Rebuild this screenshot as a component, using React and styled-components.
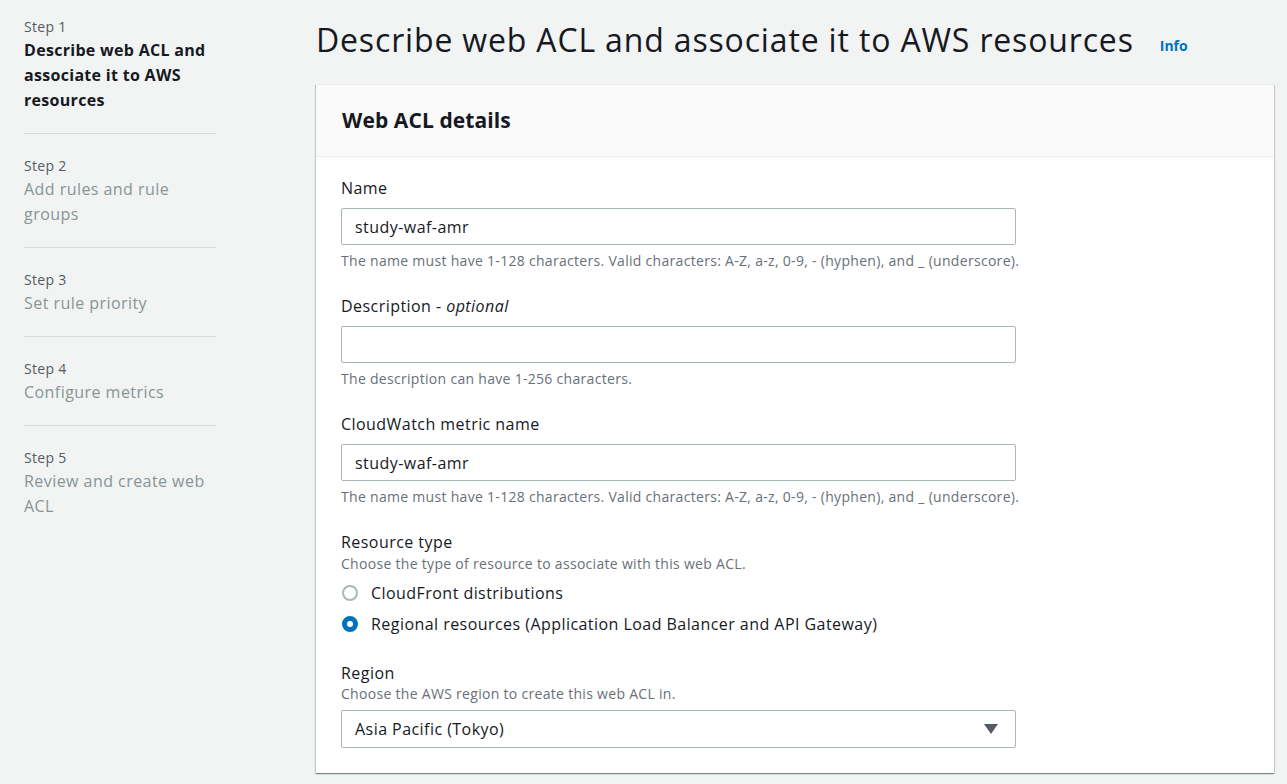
import React from "react";
import styled, { createGlobalStyle } from "styled-components";

const Global = createGlobalStyle`
  html, body { margin: 0; padding: 0; background: #f2f3f3; }
  body { font-family: "Open Sans", "Noto Sans", sans-serif; color: #16191f; }
  * { box-sizing: border-box; }
`;

const Page = styled.div`
  display: flex;
  min-height: 784px;
  background: #f2f3f3;
`;

const Sidebar = styled.nav`
  width: 216px;
  flex-shrink: 0;
  padding: 16px 0 0 24px;
`;

const StepItem = styled.div`
  padding: 21px 0 20px;
  border-bottom: 1px solid ${(p) => (p.$last ? "transparent" : "#d5dbdb")};
  &:first-child { padding-top: 0; }
`;

const StepLabel = styled.div`
  font-size: 14px;
  line-height: 22px;
  letter-spacing: 0.3px;
  color: #545b64;
`;

const StepTitle = styled.div`
  font-size: 16px;
  line-height: 25px;
  letter-spacing: ${(p) => (p.$active ? "0.3px" : "0.45px")};
  font-weight: ${(p) => (p.$active ? 700 : 400)};
  color: ${(p) => (p.$active ? "#16191f" : "#879596")};
`;

const Main = styled.main`
  flex: 1;
  padding: 20px 13px 0 100px;
`;

const TitleRow = styled.div`
  display: flex;
  align-items: center;
  gap: 26px;
  margin-bottom: 24px;
`;

const H1 = styled.h1`
  margin: 0;
  font-size: 32px;
  line-height: 40px;
  font-weight: 400;
  letter-spacing: 0.84px;
  color: #16191f;
`;

const InfoLink = styled.a`
  font-size: 14px;
  line-height: 20px;
  margin-top: 12px;
  font-weight: 700;
  color: #0073bb;
  text-decoration: none;
`;

const Card = styled.section`
  background: #fff;
  border-top: 1px solid #eaeded;
  box-shadow: 0 1px 1px 0 rgba(0, 28, 36, 0.3), 1px 1px 1px 0 rgba(0, 28, 36, 0.15),
    -1px 1px 1px 0 rgba(0, 28, 36, 0.15);
`;

const CardHeader = styled.header`
  background: #fafafa;
  border-bottom: 1px solid #eaeded;
  padding: 19px 26px 20px;
`;

const CardTitle = styled.h2`
  margin: 0;
  font-size: 21px;
  line-height: 32px;
  font-weight: 700;
  letter-spacing: 0.1px;
  color: #16191f;
`;

const CardBody = styled.div`
  padding: 20px 25px 25px;
  display: flex;
  flex-direction: column;
  gap: 26px;
`;

const Field = styled.div`
  display: flex;
  flex-direction: column;
`;

const Label = styled.label`
  font-size: 16px;
  line-height: 22px;
  letter-spacing: 0.45px;
  color: #16191f;
  em { font-style: italic; }
`;

const Description = styled.div`
  font-size: 14px;
  line-height: 16px;
  letter-spacing: 0.3px;
  color: #687078;
  margin-top: ${(p) => p.$top || 0}px;
`;

const Input = styled.input`
  width: 675px;
  height: 37px;
  margin-top: 9px;
  padding: 0 13px;
  border: 1px solid #aab7b8;
  border-radius: 2px;
  font-family: inherit;
  font-size: 16px;
  letter-spacing: 0.45px;
  color: #16191f;
  background: #fff;
  outline: none;
`;

const RadioGroup = styled.div`
  display: flex;
  flex-direction: column;
  margin: 5px 0 -3px;
`;

const RadioRow = styled.label`
  display: flex;
  align-items: center;
  gap: 13px;
  height: 31px;
  font-size: 16px;
  letter-spacing: 0.45px;
  color: #16191f;
  padding-left: 1px;
`;

const RadioDot = styled.span`
  width: 16px;
  height: 16px;
  border-radius: 50%;
  flex-shrink: 0;
  border: ${(p) => (p.$checked ? "5px solid #0073bb" : "2px solid #aab7b8")};
  background: #fff;
`;

const Select = styled.div`
  width: 675px;
  height: 38px;
  margin-top: 8px;
  padding: 0 17px 0 13px;
  border: 1px solid #aab7b8;
  border-radius: 2px;
  display: flex;
  align-items: center;
  justify-content: space-between;
  font-size: 16px;
  letter-spacing: 0.45px;
  color: #16191f;
  background: #fff;
`;

const Caret = () => (
  <svg width="14" height="10" viewBox="0 0 14 10">
    <path d="M0 0 H14 L7 10 Z" fill="#545b64" />
  </svg>
);

const steps = [
  { n: 1, title: "Describe web ACL and associate it to AWS resources", active: true },
  { n: 2, title: "Add rules and rule groups" },
  { n: 3, title: "Set rule priority" },
  { n: 4, title: "Configure metrics" },
  { n: 5, title: "Review and create web ACL" },
];

const nameHint =
  "The name must have 1-128 characters. Valid characters: A-Z, a-z, 0-9, - (hyphen), and _ (underscore).";

export default function App() {
  return (
    <>
      <Global />
      <Page>
        <Sidebar>
          {steps.map((s, i) => (
            <StepItem key={s.n} $last={i === steps.length - 1}>
              <StepLabel>Step {s.n}</StepLabel>
              <StepTitle $active={s.active}>{s.title}</StepTitle>
            </StepItem>
          ))}
        </Sidebar>
        <Main>
          <TitleRow>
            <H1>Describe web ACL and associate it to AWS resources</H1>
            <InfoLink href="#">Info</InfoLink>
          </TitleRow>
          <Card>
            <CardHeader>
              <CardTitle>Web ACL details</CardTitle>
            </CardHeader>
            <CardBody>
              <Field>
                <Label>Name</Label>
                <Input defaultValue="study-waf-amr" />
                <Description $top={8}>{nameHint}</Description>
              </Field>
              <Field>
                <Label>
                  Description - <em>optional</em>
                </Label>
                <Input defaultValue="" />
                <Description $top={8}>The description can have 1-256 characters.</Description>
              </Field>
              <Field>
                <Label>CloudWatch metric name</Label>
                <Input defaultValue="study-waf-amr" />
                <Description $top={8}>{nameHint}</Description>
              </Field>
              <Field>
                <Label>Resource type</Label>
                <Description $top={3}>Choose the type of resource to associate with this web ACL.</Description>
                <RadioGroup>
                  <RadioRow>
                    <RadioDot />
                    CloudFront distributions
                  </RadioRow>
                  <RadioRow>
                    <RadioDot $checked />
                    Regional resources (Application Load Balancer and API Gateway)
                  </RadioRow>
                </RadioGroup>
              </Field>
              <Field>
                <Label>Region</Label>
                <Description $top={2}>Choose the AWS region to create this web ACL in.</Description>
                <Select>
                  <span>Asia Pacific (Tokyo)</span>
                  <Caret />
                </Select>
              </Field>
            </CardBody>
          </Card>
        </Main>
      </Page>
    </>
  );
}
